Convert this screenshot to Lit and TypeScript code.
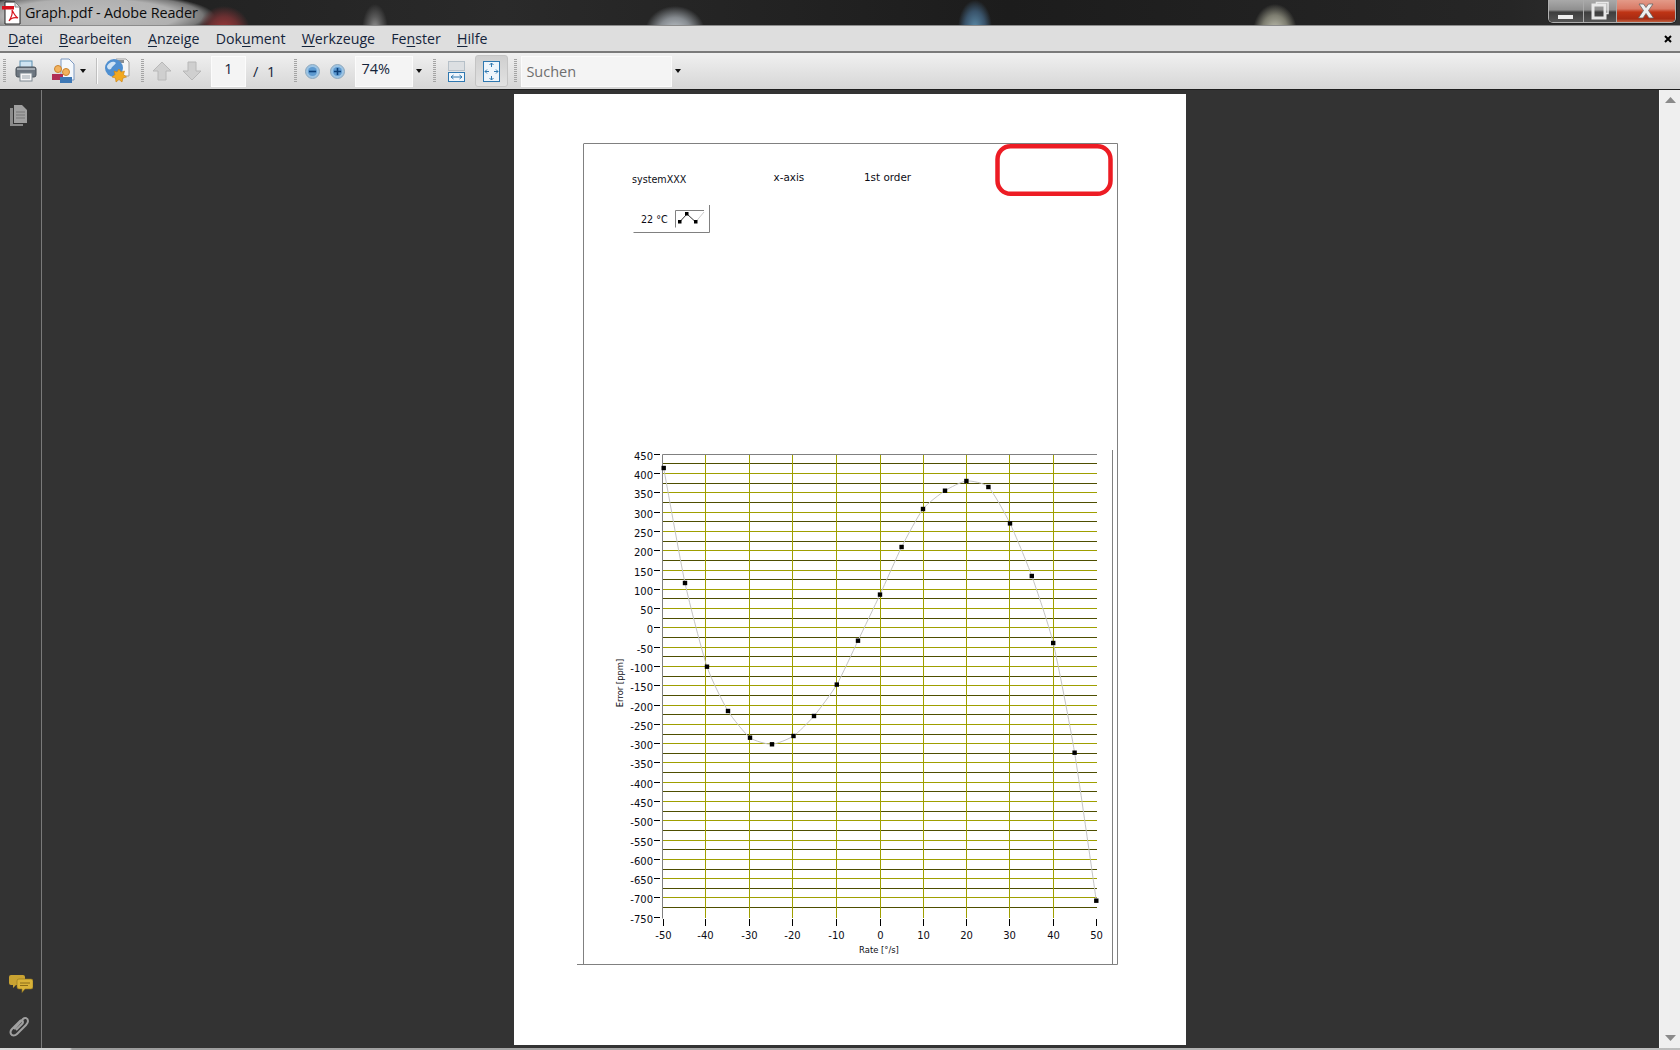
import { LitElement, html, css, svg } from "lit";
import { customElement } from "lit/decorators.js";

const TICK_XS = [663, 705, 749, 792, 836, 880, 923, 966, 1009, 1053, 1096];
const X_LABELS = [-50, -40, -30, -20, -10, 0, 10, 20, 30, 40, 50];
const POINTS: [number, number][] = [
  [663.7, 468], [685, 583], [707, 666.7], [728, 711], [750, 737.7], [772, 744.3], [793.5, 736],
  [814, 716], [836.8, 684.6], [858, 640.7], [880, 594.6], [901.6, 547], [923, 509], [945, 490.7],
  [966.4, 481], [988.4, 487], [1010, 523.4], [1031.8, 576], [1053.2, 643], [1074.6, 752.7], [1096.3, 900.7],
];
const Y0 = 454.3;
const DY = 19.29;

function curvePath(p: [number, number][]) {
  let d = `M${p[0][0]} ${p[0][1]}`;
  const t = 10;
  for (let i = 0; i < p.length - 1; i++) {
    const a = p[Math.max(i - 1, 0)], b = p[i], c = p[i + 1], e = p[Math.min(i + 2, p.length - 1)];
    const c1x = b[0] + (c[0] - a[0]) / t, c1y = b[1] + (c[1] - a[1]) / t;
    const c2x = c[0] - (e[0] - b[0]) / t, c2y = c[1] - (e[1] - b[1]) / t;
    d += `C${c1x.toFixed(1)} ${c1y.toFixed(1)} ${c2x.toFixed(1)} ${c2y.toFixed(1)} ${c[0]} ${c[1]}`;
  }
  return d;
}

function chart() {
  const grid = [];
  for (let k = 0; k < 24; k++) {
    const dark = Math.floor(Y0 + DY * (k + 0.5)) + 0.5;
    grid.push(svg`<line x1="663" x2="1097" y1=${dark} y2=${dark} stroke="#4e4e00"/>`);
    if (k < 23) {
      const bright = Math.floor(Y0 + DY * (k + 1)) + 0.5;
      grid.push(svg`<line x1="663" x2="1097" y1=${bright} y2=${bright} stroke="#9f9f00"/>`);
    }
  }
  const yTicks = [];
  for (let k = 0; k <= 24; k++) {
    const y = Math.floor(Y0 + DY * k) + 0.5;
    yTicks.push(svg`<line x1="654" x2="660" y1=${y} y2=${y} stroke="#000"/>
      <text x="653" y=${y + 5.5} text-anchor="end" class="tick">${450 - k * 50}</text>`);
  }
  return svg`
    <g fill="none" stroke="#808080">
      <path d="M583.5 144V964.5M577 964.5H1117.5V143.5H583.5M1112.5 450V964.5"/>
    </g>
    <rect x="997.500" y="146.200" width="113" height="47.600" rx="13" fill="none" stroke="#ed1c24" stroke-width="4.500"/>
    <text x="632" y="182.700" class="head">systemXXX</text>
    <text x="773.500" y="181" class="head2">x-axis</text>
    <text x="864" y="181" class="head2">1st order</text>
    <path d="M633.500 232.500H709.500V205" fill="none" stroke="#808080"/>
    <path d="M675.500 227.500V210.500H704" fill="none" stroke="#808080"/>
    <text x="641" y="223.300" class="head">22 °C</text>
    <path d="M679.600 222L687 214L695.700 222" fill="none" stroke="#333"/>
    <path d="M695.700 222L704 212" fill="none" stroke="#ccc"/>
    <rect x="678" y="220" width="3.500" height="3.500"/><rect x="685" y="212" width="3.500" height="3.500"/><rect x="694" y="220" width="3.500" height="3.500"/>
    ${grid}
    ${TICK_XS.slice(1, 10).map((x) => svg`<line x1=${x + 0.5} x2=${x + 0.5} y1="454" y2="918" stroke="#9f9f00"/>`)}
    <path d="M662.500 918.500V454.500H1097" fill="none" stroke="#808080"/>
    ${yTicks}
    ${TICK_XS.map((x, i) => svg`<line x1=${x + 0.5} x2=${x + 0.5} y1="919" y2="926" stroke="#000"/>
      <text x=${x + 0.5} y="939" text-anchor="middle" class="tick">${X_LABELS[i]}</text>`)}
    <path d=${curvePath(POINTS)} fill="none" stroke="#c4c4c4"/>
    ${POINTS.map(([x, y]) => svg`<rect x=${x - 2.2} y=${y - 2.2} width="4.4" height="4.4"/>`)}
    <text x="879" y="953" text-anchor="middle" class="axis">Rate [°/s]</text>
    <text transform="translate(623 683) rotate(-90)" text-anchor="middle" class="axis">Error [ppm]</text>
  `;
}

@customElement("app-root")
export class AppRoot extends LitElement {
  static styles = css`
    :host { display: flex; flex-direction: column; height: 1050px; width: 1680px; overflow: hidden; background: #333; font-family: "Open Sans", "Noto Sans", sans-serif; }
    .title {
      height: 25px; flex: none; display: flex; align-items: center; border-bottom: 1px solid #8c8c8c;
      background:
        radial-gradient(ellipse 26px 24px at 224px 30px, #a0383a 0%, #6c3032 55%, transparent 100%),
        radial-gradient(ellipse 13px 26px at 375px 30px, #9a9a9a 0%, #5a5a5a 50%, transparent 100%),
        radial-gradient(ellipse 30px 26px at 675px 32px, #c8ced4 0%, #868b90 55%, transparent 100%),
        radial-gradient(ellipse 17px 28px at 975px 28px, #5a8aa8 0%, #39536a 60%, transparent 100%),
        radial-gradient(ellipse 22px 28px at 1275px 32px, #c8c8b8 0%, #7d7d70 60%, transparent 100%),
        radial-gradient(ellipse 125px 24px at 90px 16px, #bdbdbd 0%, #b0b0b0 70%, #777 90%, transparent 100%),
        linear-gradient(90deg, #1e1e1e, #2a2a2a 30%, #1c1c1c 60%, #262626 90%, #333);
    }
    .appicon { margin-left: 2px; flex: none; }
    .title-text { margin-left: 4px; font-size: 14.4px; color: #0c0c0c; letter-spacing: -0.1px; }
    .winctl { margin-left: auto; margin-right: 4px; align-self: flex-start; display: flex; height: 22px; border: 1px solid #b0b0b0; border-top: 0; border-radius: 0 0 5px 5px; box-shadow: 0 0 0 1px #222; overflow: hidden; }
    .wb { display: flex; align-items: center; justify-content: center; }
    .wb.min, .wb.max { background: linear-gradient(#a9a9a9, #8f8f8f 45%, #3e3e3e 55%, #555); border-right: 1px solid #aaa; }
    .wb.min { width: 34px; }
    .wb.max { width: 32px; }
    .wb.close { width: 58px; background: linear-gradient(#e39a88, #d97a66 40%, #bf3415 55%, #a82a12 85%, #c06040); }
    .menu { height: 25px; flex: none; display: flex; align-items: center; gap: 16.2px; padding: 0 8px; background: #dedede; border-bottom: 2px solid #7a7a7a; font-size: 14.2px; color: #14243a; }
    .menu u { text-underline-offset: 2px; }
    .menu .x { margin-left: auto; }
    .toolbar { height: 36px; flex: none; display: flex; align-items: center; background: linear-gradient(#f0f0f0, #d6d6d6); border-bottom: 1px solid #1e1e1e; font-size: 14.5px; color: #14243a; }
    .grip { width: 3px; height: 24px; flex: none; background-image: repeating-linear-gradient(#a4a4a4 0 1px, transparent 1px 2px); }
    .sep { width: 1px; height: 26px; flex: none; background: #c0c0c0; box-shadow: 1px 0 0 #fafafa; }
    .field { flex: none; box-sizing: border-box; height: 31px; background: #f4f4f4; border: 1px solid #fbfbfb; display: flex; padding-bottom: 6px; align-items: center; }
    .pagefield { width: 35px; justify-content: center; }
    .zoomfield { width: 58px; padding-left: 5px; }
    .searchfield { width: 151px; padding: 0 0 0 4px; color: #6e6e6e; font-size: 14.5px; }
    .pressed { width: 33px; height: 32px; flex: none; display: flex; align-items: center; justify-content: center; background: linear-gradient(#cfcfcf, #e2e2e2); border: 1px solid #c4c4c4; border-radius: 3px; box-sizing: border-box; }
    .caret { width: 0; height: 0; flex: none; border: 3.5px solid transparent; border-top: 4px solid #111; border-bottom: 0; }
    .ic { flex: none; display: block; }
    .main { flex: 1; min-height: 0; display: flex; }
    .side { flex: none; border-right: 1px solid #7a7a7a; display: flex; flex-direction: column; align-items: flex-start; padding: 14px 0 10px 9px; width: 32px; background: #333; }
    .side .bottom { margin-top: auto; display: flex; flex-direction: column; gap: 22px; }
    .view { flex: 1; display: flex; justify-content: center; padding: 4px 2px 0 0; background: #333; }
    .page { width: 672px; height: 951px; background: #fff; flex: none; display: block; }
    .page text { font-family: "DejaVu Sans", sans-serif; fill: #0c0c14; }
    .tick { font-size: 10px; }
    .head { font-size: 9.6px; }
    .head2 { font-size: 10.4px; }
    .axis { font-size: 8.4px; }
    .scroll { width: 21px; flex: none; background: #efefef; display: flex; flex-direction: column; justify-content: space-between; align-items: center; padding: 7px 0 7px; box-sizing: border-box; border-left: 1px solid #f8f8f8; }
    .foot { height: 2px; flex: none; background: linear-gradient(90deg, #d8d8d8, #d0d0d0 70px, #9c9c9c 72px, #bdbdbd); }
  `;

  render() {
    return html`
      <div class="title">
        <svg class="appicon" width="19" height="24" viewBox="0 0 19 24">
          <path d="M3 1H13L18 6V23H3Z" fill="#fff" stroke="#222" stroke-width="1"/>
          <path d="M13 1V6H18" fill="#ddd" stroke="#888"/>
          <rect x="0" y="5" width="12" height="3.500" fill="#d8121c"/>
          <path d="M7 20C10 15 11 12 10 9C13 15 14 16 16 17C12 16 9 17 7 20Z" fill="none" stroke="#d8121c" stroke-width="1.200"/>
        </svg>
        <span class="title-text">Graph.pdf - Adobe Reader</span>
        <div class="winctl">
          <div class="wb min"><svg width="18" height="20" viewBox="0 0 18 20"><rect x="1" y="14" width="15" height="4" fill="#eee"/></svg></div>
          <div class="wb max"><svg width="20" height="20" viewBox="0 0 20 20"><path d="M6.500 3.500V1.500H18V12.500H15.500" fill="none" stroke="#e8e8e8" stroke-width="1.500"/><rect x="3" y="4" width="12" height="13" fill="none" stroke="#e8e8e8" stroke-width="3"/></svg></div>
          <div class="wb close"><svg width="18" height="16" viewBox="0 0 18 16"><path d="M2 1H6.500L9 4.500L11.500 1H16L11.500 7.500L16.500 15H12L9 10.500L6 15H1.500L6.500 7.500Z" fill="#eee" stroke="#666" stroke-width=".8"/></svg></div>
        </div>
      </div>
      <div class="menu">
        <span><u>D</u>atei</span><span><u>B</u>earbeiten</span><span><u>A</u>nzeige</span><span>Dok<u>u</u>ment</span><span><u>W</u>erkzeuge</span><span>Fe<u>n</u>ster</span><span><u>H</u>ilfe</span>
        <svg class="x" width="8" height="8" viewBox="0 0 8 8"><path d="M1 1L7 7M7 1L1 7" stroke="#000" stroke-width="2"/></svg>
      </div>
      <div class="toolbar">
        <div class="grip" style="margin-left:3px"></div>
        <svg class="ic" style="margin-left:9px" width="22" height="22" viewBox="0 0 22 22">
          <rect x="5" y="1" width="12" height="7" fill="#cfe4f2" stroke="#5d8fb0"/>
          <rect x="1" y="7" width="20" height="10" rx="2" fill="#6d7680" stroke="#4a525a"/>
          <rect x="2" y="8" width="18" height="2" fill="#a6adb4"/>
          <rect x="5" y="13" width="12" height="8" fill="#f6f6f6" stroke="#7d8790"/>
          <path d="M7 16H15M7 18H15" stroke="#9aa4ac"/>
        </svg>
        <svg class="ic" style="margin-left:14px" width="24" height="26" viewBox="0 0 24 26">
          <path d="M10 1H18L23 6V22H10Z" fill="#f4f8fc" stroke="#7d99c0"/>
          <circle cx="7" cy="11" r="3.500" fill="#f2b25e" stroke="#c9832e"/>
          <path d="M1 16H12V22H1Z" fill="#b02e55"/>
          <circle cx="15" cy="14" r="3.500" fill="#f2b25e" stroke="#c9832e"/>
          <path d="M9 19H21V25H9Z" fill="#3e78b5"/>
        </svg>
        <div class="caret" style="margin-left:5px"></div>
        <div class="sep" style="margin-left:10px"></div>
        <svg class="ic" style="margin-left:7px" width="26" height="26" viewBox="0 0 26 26">
          <path d="M12 1H22L25 4V18H12Z" fill="#f6f6f6" stroke="#a0a0a0"/>
          <rect x="10" y="2" width="10" height="3" fill="#8a8f94"/>
          <circle cx="10" cy="10" r="9" fill="#4f8fd0"/>
          <path d="M3 8C6 3 10 3 12 5C10 8 8 8 7 11C5 12 3 11 3 8Z" fill="#cfe3f5"/>
          <path d="M15 11L17 14L20.500 13L19.500 16.500L22.500 19L19 20L18 24L15 21.500L12 24L11.500 20L8 19L11 16.500L10 13L13 14Z" fill="#f2a91f" stroke="#c77f10" stroke-width=".6"/>
        </svg>
        <div class="grip" style="margin-left:11px"></div>
        <svg class="ic" style="margin-left:8px" width="20" height="20" viewBox="0 0 20 20"><path d="M10 1L19 10H14V19H6V10H1Z" fill="#cfcfcf" stroke="#b8b8b8"/></svg>
        <svg class="ic" style="margin-left:10px" width="20" height="20" viewBox="0 0 20 20"><path d="M10 19L19 10H14V1H6V10H1Z" fill="#cfcfcf" stroke="#b8b8b8"/></svg>
        <div class="field pagefield" style="margin-left:9px">1</div>
        <span style="margin-left:7px;word-spacing:5px;flex:none">/ 1</span>
        <div class="grip" style="margin-left:19px"></div>
        <svg class="ic" style="margin-left:8px" width="15" height="15" viewBox="0 0 15 15"><circle cx="7.500" cy="7.500" r="7" fill="#9cc4e4" stroke="#8fa8bc"/><circle cx="7.500" cy="7.500" r="4.500" fill="#5e9ad0"/><rect x="4" y="6.700" width="7" height="1.600" fill="#0d3f78"/></svg>
        <svg class="ic" style="margin-left:10px" width="15" height="15" viewBox="0 0 15 15"><circle cx="7.500" cy="7.500" r="7" fill="#9cc4e4" stroke="#8fa8bc"/><circle cx="7.500" cy="7.500" r="4.500" fill="#5e9ad0"/><path d="M4 7.500H11M7.500 4V11" stroke="#0d3f78" stroke-width="1.600"/></svg>
        <div class="field zoomfield" style="margin-left:10px">74%</div>
        <div class="caret" style="margin-left:3px"></div>
        <div class="grip" style="margin-left:11px"></div>
        <svg class="ic" style="margin-left:12px" width="17" height="21" viewBox="0 0 17 21">
          <rect x=".5" y=".5" width="16" height="9" fill="#dcdfe2" stroke="#b6c0c8"/>
          <rect x=".5" y="11.500" width="16" height="9" fill="#f0f6fb" stroke="#2f78b0"/>
          <path d="M3 16H14M3 16L5.500 14M3 16L5.500 18M14 16L11.500 14M14 16L11.500 18" stroke="#2f78b0" fill="none"/>
        </svg>
        <div class="pressed" style="margin-left:10px">
          <svg width="17" height="21" viewBox="0 0 17 21">
            <rect x=".5" y=".5" width="16" height="20" fill="#eef5fb" stroke="#2f78b0"/>
            <path d="M8.500 2V6M6.500 4L8.500 2L10.500 4M8.500 19V15M6.500 17L8.500 19L10.500 17M2 10.500H6M4 8.500L2 10.500L4 12.500M15 10.500H11M13 8.500L15 10.500L13 12.500" stroke="#2f78b0" fill="none"/>
          </svg>
        </div>
        <div class="grip" style="margin-left:6px"></div>
        <div class="field searchfield" style="margin-left:4px">Suchen</div>
        <div class="caret" style="margin-left:3px"></div>
      </div>
      <div class="main">
        <div class="side">
          <svg width="19" height="23" viewBox="0 0 19 23">
            <path d="M1 4H4V20H14V22H1Z" fill="#8a8a8a"/>
            <path d="M5 1H13L18 6V19H5Z" fill="#a0a0a0"/>
            <path d="M7 8H16M7 11H16M7 14H16" stroke="#777"/>
          </svg>
          <div class="bottom">
            <svg width="24" height="19" viewBox="0 0 24 19">
              <path d="M2 1H14Q16 1 16 3V9Q16 11 14 11H7L4 14V11H2Q0 11 0 9V3Q0 1 2 1Z" fill="#c9a332"/>
              <path d="M10 5H22Q24 5 24 7V13Q24 15 22 15H16L13 18.500V15H10Q8 15 8 13V7Q8 5 10 5Z" fill="#d9b238" stroke="#8f7420" stroke-width=".6"/>
              <path d="M11 9H21M11 11.500H19" stroke="#8a6c18"/>
            </svg>
            <svg width="21" height="23" viewBox="0 0 21 23">
              <path d="M5 14L14 4C16 2 19 3 19 6C19 8 18 9 17 10L8 19C6 21 3 21 2 19C1 17 2 15 3 14L11 6C12 5 14 5 14 7C14 8 13 9 13 9L7 15" fill="none" stroke="#a0a0a0" stroke-width="2"/>
            </svg>
          </div>
        </div>
        <div class="view">
          <svg class="page" width="672" height="951" viewBox="514 94 672 951">${chart()}</svg>
        </div>
        <div class="scroll">
          <svg width="11" height="6" viewBox="0 0 11 6"><path d="M5.500 0L11 6H0Z" fill="#8a8a8a"/></svg>
          <svg width="11" height="6" viewBox="0 0 11 6"><path d="M5.500 6L11 0H0Z" fill="#8a8a8a"/></svg>
        </div>
      </div>
      <div class="foot"></div>
    `;
  }
}
